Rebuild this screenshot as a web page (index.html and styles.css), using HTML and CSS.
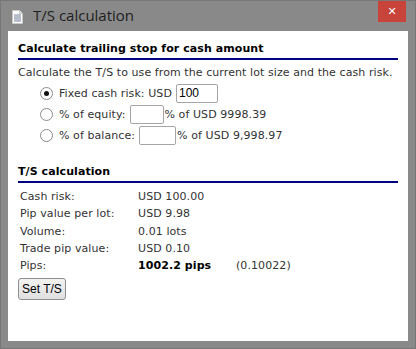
FILE: index.html
```html
<!DOCTYPE html>
<html lang="en">
<head>
    <meta charset="UTF-8">
    <meta name="viewport" content="width=device-width, initial-scale=1.0">
    <title>T/S calculation</title>
    <link rel="stylesheet" href="styles.css">
</head>
<body>
    <div class="window">
        <div class="titlebar">
            <svg class="doc-icon" width="11" height="14" viewBox="0 0 11 14">
                <path d="M0.5 0.5h7l3 3v10h-10z" fill="#fff" stroke="#c8c8c8"/>
                <path d="M7.5 0.5v3h3" fill="#e6e6e6" stroke="#c8c8c8"/>
                <path d="M2 5h7M2 7h7M2 9h7M2 11h7" stroke="#6d7f95" stroke-width="1"/>
            </svg>
            <span class="title">T/S calculation</span>
            <div class="close-btn">&#x2715;</div>
        </div>

        <div class="content">
            <h3 class="section-title">Calculate trailing stop for cash amount</h3>
            <p class="intro">Calculate the T/S to use from the current lot size and the cash risk.</p>

            <div class="options">
                <label class="option">
                    <input type="radio" name="mode" checked>
                    Fixed cash risk: USD <input type="text" class="amount w-fixed" value="100">
                </label>
                <label class="option">
                    <input type="radio" name="mode">
                    % of equity: <input type="text" class="amount w-equity">% of USD 9998.39
                </label>
                <label class="option">
                    <input type="radio" name="mode">
                    % of balance: <input type="text" class="amount w-balance">% of USD 9,998.97
                </label>
            </div>

            <h3 class="section-title">T/S calculation</h3>
            <div class="results">
                <div class="row"><span class="key">Cash risk:</span><span>USD 100.00</span></div>
                <div class="row"><span class="key">Pip value per lot:</span><span>USD 9.98</span></div>
                <div class="row"><span class="key">Volume:</span><span>0.01 lots</span></div>
                <div class="row"><span class="key">Trade pip value:</span><span>USD 0.10</span></div>
                <div class="row"><span class="key">Pips:</span><span class="pips">1002.2 pips</span><span>(0.10022)</span></div>
            </div>

            <button class="set-btn">Set T/S</button>
        </div>
    </div>
</body>
</html>
```

FILE: styles.css
```css
body {
    margin: 0;
    font-family: "DejaVu Sans", Verdana, sans-serif;
}
.window {
    width: 416px;
    height: 349px;
    box-sizing: border-box;
    background-color: #898989;
    border: 1px solid #777;
    display: flex;
    flex-direction: column;
}
.titlebar {
    height: 30px;
    display: flex;
    align-items: flex-start;
    padding-left: 11px;
}
.doc-icon {
    margin-top: 9px;
}
.title {
    font-family: "Open Sans", "Noto Sans", sans-serif;
    font-size: 15px;
    color: #1e1e1e;
    margin-left: 10px;
    margin-top: 4px;
}
.close-btn {
    margin-left: auto;
    margin-right: 9px;
    width: 28px;
    height: 21px;
    background-color: #c8443b;
    color: #fff;
    font-size: 11px;
    line-height: 21px;
    text-align: center;
}
.content {
    flex: 1;
    margin: 0 7px 7px 7px;
    background: white;
    padding: 11px 10px 0 10px;
    font-size: 11px;
    letter-spacing: 0.08px;
    color: #333;
}
.section-title {
    margin: 0;
    font-size: 11px;
    font-weight: bold;
    color: #000;
    padding: 0 0 3px 0;
    border-bottom: 2px solid #000080;
}
.intro {
    margin: 6px 0 4px 0;
}
.options {
    display: flex;
    flex-direction: column;
    gap: 1px;
    padding-left: 21px;
    margin-bottom: 20px;
}
.option {
    display: flex;
    align-items: center;
    height: 20px;
}
.option input[type="radio"] {
    appearance: none;
    box-sizing: border-box;
    margin: 0 6px 0 1px;
    width: 13px;
    height: 13px;
    border: 1px solid #8c8c8c;
    border-radius: 50%;
    background: #fff;
    display: grid;
    place-content: center;
}
.option input[type="radio"]:checked::before {
    content: "";
    width: 5px;
    height: 5px;
    border-radius: 50%;
    background: #111;
}
.amount {
    box-sizing: border-box;
    height: 19px;
    border: 1px solid #a5a5a5;
    border-radius: 2px;
    padding: 0 2px;
    font-family: "Liberation Sans", Arial, sans-serif;
    font-size: 12px;
    margin: 0 1px 0 4px;
}
.w-fixed { width: 42px; }
.w-equity { width: 34px; }
.w-balance { width: 37px; }
.results {
    margin-top: 5px;
    padding-left: 2px;
}
.row {
    display: flex;
    height: 17.3px;
    align-items: center;
}
.key {
    width: 118px;
}
.pips {
    font-weight: bold;
    width: 98px;
    color: #000;
}
.set-btn {
    margin-top: 4px;
    font-family: "Liberation Sans", Arial, sans-serif;
    font-size: 12px;
    padding: 3px 3px;
    border: 1px solid #8f8f8f;
    border-radius: 3px;
    background: linear-gradient(#f2f2f2, #e0e0e0);
    color: #000;
}
```
